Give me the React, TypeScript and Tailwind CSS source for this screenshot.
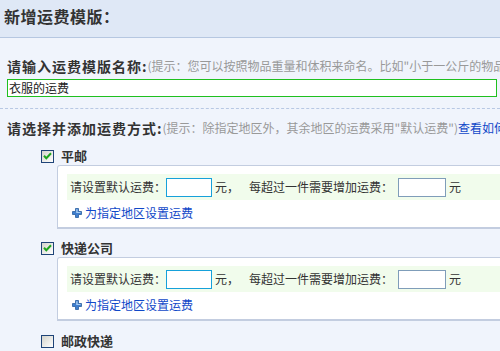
import React from "react";

function CheckBox({ checked }: { checked: boolean }) {
  return (
    <span className="flex h-[13px] w-[13px] shrink-0 items-center justify-center border border-[#1f4478] bg-linear-to-br from-[#d4d4cc] to-white">
      {checked && (
        <svg width="9" height="8" viewBox="0 0 9 8">
          <path d="M1 3.8l2.3 2.4L8 1.2" stroke="#1ea51e" strokeWidth="2" fill="none" />
        </svg>
      )}
    </span>
  );
}

function PlusIcon() {
  return (
    <svg width="10" height="10" viewBox="0 0 10 10" className="shrink-0">
      <path d="M3.5 0.5h3v3h3v3h-3v3h-3v-3h-3v-3h3z" fill="#3f7fcf" stroke="#2a5d9e" strokeWidth="0.8" />
      <path d="M4.2 1.2h1.4v2.9h2.9v0.9h-2.9H4.2z" fill="#a9cdf2" />
    </svg>
  );
}

function FeePanel() {
  return (
    <div className="ml-[57px] mt-[1px] w-[480px] rounded-tl-[3px] border border-b-2 border-[#c3cde0] bg-white pl-[9px] pt-[8px] pb-[6px]">
      <div className="flex h-[26px] items-center bg-[#f1fcec] pl-[3px] text-[12px] text-[#333]">
        <span>请设置默认运费：</span>
        <input className="h-[19px] w-[46px] border border-[#16a1da] bg-white outline-none" />
        <span className="ml-[3px] whitespace-pre">元，   </span>
        <span className="ml-[2px]">每超过一件需要增加运费：</span>
        <input className="ml-[5px] h-[19px] w-[48px] border border-[#7f9db9] bg-white outline-none" />
        <span className="ml-[3px]">元</span>
      </div>
      <div className="mt-[4px] flex h-[17px] items-center pl-[5px] text-[12px] text-[#1048c8]">
        <PlusIcon />
        <span className="ml-[3px]">为指定地区设置运费</span>
      </div>
    </div>
  );
}

function Method({ name, checked, panel, top }: { name: string; checked: boolean; panel: boolean; top: string }) {
  return (
    <div className={top}>
      <div className="flex h-[16px] items-center pl-[41px]">
        <CheckBox checked={checked} />
        <span className="ml-[7px] text-[13px] font-bold text-[#333]">{name}</span>
      </div>
      {panel && <FeePanel />}
    </div>
  );
}

export default function App() {
  return (
    <div className="h-[351px] w-[500px] overflow-hidden bg-[#f0f4fc] font-['Noto_Sans_CJK_SC','Liberation_Sans',sans-serif] text-[#333]">
      <div className="flex h-[38px] items-center border-b border-[#b6c7e1] bg-[#dfe8f6] pl-[4px] pb-[6px]">
        <h1 className="text-[16px] font-bold leading-none tracking-[0.5px] text-[#333]">新增运费模版：</h1>
      </div>

      <div className="mt-[18px] flex h-[20px] items-center whitespace-nowrap pl-[7px]">
        <span className="text-[14px] font-bold tracking-[1px]">请输入运费模版名称:</span>
        <span className="text-[12px] text-[#999]">(提示：您可以按照物品重量和体积来命名。比如"小于一公斤的物品")</span>
      </div>
      <div className="ml-[7px] mt-[3px] flex h-[18px] w-[490px] items-center border border-[#1fc01f] bg-white pl-[1px] text-[12px] text-[#222]">
        衣服的运费
      </div>
      <div className="mt-[11px] border-t border-dashed border-[#b8c8e4]" />

      <div className="mt-[9px] flex h-[20px] items-center whitespace-nowrap pl-[7px]">
        <span className="text-[14px] font-bold tracking-[1px]">请选择并添加运费方式:</span>
        <span className="text-[12px] text-[#999]">(提示：除指定地区外，其余地区的运费采用"默认运费")</span>
        <span className="text-[12px] text-[#1048c8]">查看如何设置</span>
      </div>

      <Method name="平邮" checked panel top="mt-[10px]" />
      <Method name="快递公司" checked panel top="mt-[11px]" />
      <Method name="邮政快递" checked={false} panel={false} top="mt-[12px]" />
    </div>
  );
}
